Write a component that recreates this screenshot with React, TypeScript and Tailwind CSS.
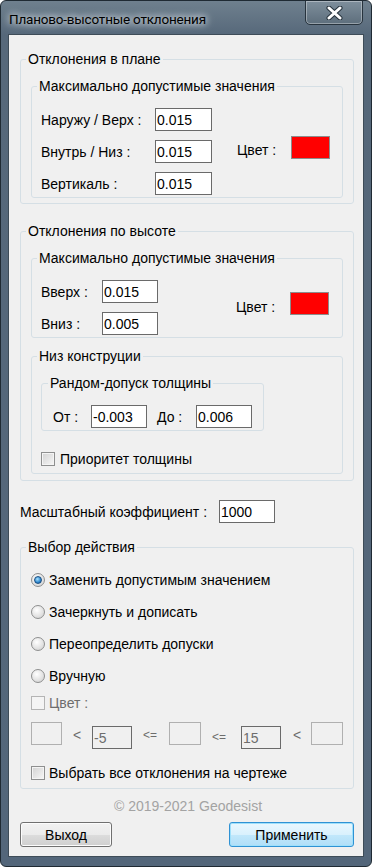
import React from 'react';

const inputCls =
  'h-[23px] bg-white border border-[#6a6a6a] flex items-center pl-[1px] leading-[16px] text-black';

function TextBox({ value, w }: { value: string; w: string }) {
  return <div className={`${inputCls} ${w}`}>{value}</div>;
}

function Swatch({ mt }: { mt: string }) {
  return <div className={`w-[39px] h-[23px] bg-[#ff0000] border border-[#8c8c8c] ${mt}`} />;
}

function CheckBox({ disabled }: { disabled?: boolean }) {
  return (
    <div
      className={
        disabled
          ? 'w-[14px] h-[14px] border border-[#b4b4b4] bg-[#f4f4f4]'
          : 'w-[14px] h-[14px] border border-[#8e8f8f] bg-[linear-gradient(135deg,#d2d2d2,#f7f7f7)] shadow-[inset_0_0_0_1px_#f4f4f4]'
      }
    />
  );
}

function Radio({ checked }: { checked?: boolean }) {
  return (
    <div className="w-[14px] h-[14px] rounded-full border border-[#8e8f8f] bg-[radial-gradient(circle_at_40%_35%,#ffffff,#dcdcdc_70%,#c4c4c4)] flex items-center justify-center">
      {checked && (
        <div className="w-[8px] h-[8px] rounded-full border border-[#1b4f82] bg-[radial-gradient(circle_at_40%_35%,#a8e2ff,#2e88cf_60%,#174d86)]" />
      )}
    </div>
  );
}

const groupCls = 'border border-[#d5dfe5] rounded-[3px]';

function App() {
  return (
    <div className="w-[372px] h-[867px] overflow-hidden rounded-[6px] border border-[#1f2a33] bg-[linear-gradient(180deg,#6f808e_0px,#56687a_34px,#53667a_100%)] font-['Liberation_Sans',Arial,sans-serif] text-[14px] text-black">
      {/* title bar */}
      <div className="h-[33px] flex items-start justify-between pl-[8px] pr-[8px]">
        <span className="mt-[8px] text-[13.5px] tracking-[-0.2px] leading-[20px] font-['Roboto',sans-serif] text-black [text-shadow:0_0_6px_#e8eef2,0_0_10px_#e8eef2]">
          Планово-высотные отклонения
        </span>
        <div className="w-[58px] h-[25px] mt-[-1px] rounded-b-[5px] border border-[#27333d] bg-[linear-gradient(180deg,#7f8f9c,#5d6e7c)] shadow-[inset_0_0_0_1px_rgba(255,255,255,0.35)] flex items-center justify-center">
          <svg width="17" height="14" viewBox="0 0 17 14">
            <path d="M3 2 L14 12 M14 2 L3 12" stroke="#26323c" strokeWidth="5" strokeLinecap="round" />
            <path d="M3 2 L14 12 M14 2 L3 12" stroke="#ffffff" strokeWidth="3" strokeLinecap="round" />
          </svg>
        </div>
      </div>

      {/* client area */}
      <div className="mx-[7px] h-[823px] border border-[#3e4c58] bg-[#f0f0f0] flex flex-col">
        {/* Отклонения в плане */}
        <fieldset className={`${groupCls} ml-[11px] mt-[17px] w-[334px] pb-[5px]`}>
          <legend className="ml-[5px] px-[2px] leading-[15px]">Отклонения в плане</legend>
          <fieldset className={`${groupCls} ml-[10px] mt-[12px] w-[312px] pt-[14px] pl-[9px] pb-[2px]`}>
            <legend className="ml-[-4px] px-[2px] leading-[15px]">Максимально допустимые значения</legend>
            <div className="flex items-start">
              <div className="flex flex-col gap-[9px]">
                {['Наружу / Верх :', 'Внутрь / Низ :', 'Вертикаль :'].map((l) => (
                  <div key={l} className="flex items-center">
                    <span className="w-[114px] pt-[2px]">{l}</span>
                    <TextBox value="0.015" w="w-[57px]" />
                  </div>
                ))}
              </div>
              <span className="ml-[25px] w-[54px] mt-[34px] leading-[16px]">Цвет :</span>
              <Swatch mt="mt-[28px]" />
            </div>
          </fieldset>
        </fieldset>

        {/* Отклонения по высоте */}
        <fieldset className={`${groupCls} ml-[11px] mt-[20px] w-[334px] pb-[6px]`}>
          <legend className="ml-[5px] px-[2px] leading-[15px]">Отклонения по высоте</legend>
          <fieldset className={`${groupCls} ml-[10px] mt-[12px] w-[312px] pt-[14px] pl-[9px] pb-[2px]`}>
            <legend className="ml-[-4px] px-[2px] leading-[15px]">Максимально допустимые значения</legend>
            <div className="flex items-start">
              <div className="flex flex-col gap-[9px]">
                {[
                  ['Вверх :', '0.015'],
                  ['Вниз :', '0.005'],
                ].map(([l, v]) => (
                  <div key={l} className="flex items-center">
                    <span className="w-[61px] pt-[2px]">{l}</span>
                    <TextBox value={v} w="w-[56px]" />
                  </div>
                ))}
              </div>
              <span className="ml-[78px] w-[54px] mt-[19px] leading-[16px]">Цвет :</span>
              <Swatch mt="mt-[12px]" />
            </div>
          </fieldset>

          <fieldset className={`${groupCls} ml-[10px] mt-[11px] w-[312px] pb-[6px]`}>
            <legend className="ml-[5px] px-[2px] leading-[15px]">Низ конструции</legend>
            <fieldset className={`${groupCls} ml-[9px] mt-[12px] w-[223px] pt-[14px] pl-[11px] pb-[2px]`}>
              <legend className="ml-[-5px] px-[2px] leading-[15px]">Рандом-допуск толщины</legend>
              <div className="flex items-center">
                <span className="w-[38px] pt-[2px]">От :</span>
                <TextBox value="-0.003" w="w-[56px]" />
                <span className="ml-[10px] w-[39px] pt-[2px]">До :</span>
                <TextBox value="0.006" w="w-[56px]" />
              </div>
            </fieldset>
            <div className="mt-[20px] ml-[9px] h-[16px] flex items-center gap-[5px]">
              <CheckBox />
              <span className="leading-[16px]">Приоритет толщины</span>
            </div>
          </fieldset>
        </fieldset>

        {/* Масштабный коэффициент */}
        <div className="mt-[19px] ml-[11px] flex items-center">
          <span className="w-[199px] pt-[2px]">Масштабный коэффициент :</span>
          <TextBox value="1000" w="w-[56px]" />
        </div>

        {/* Выбор действия */}
        <fieldset className={`${groupCls} ml-[11px] mt-[17px] w-[334px] pt-[17px] pl-[10px] pb-[7px]`}>
          <legend className="ml-[-5px] px-[2px] leading-[15px]">Выбор действия</legend>
          <div className="flex flex-col gap-[16px]">
            {[
              'Заменить допустимым значением',
              'Зачеркнуть и дописать',
              'Переопределить допуски',
              'Вручную',
            ].map((l, i) => (
              <div key={l} className="h-[16px] flex items-center gap-[4px]">
                <Radio checked={i === 0} />
                <span className="leading-[16px]">{l}</span>
              </div>
            ))}
          </div>
          <div className="mt-[11px] h-[16px] flex items-center gap-[4px]">
            <CheckBox disabled />
            <span className="leading-[16px] text-[#6d6d6d]">Цвет :</span>
          </div>
          <div className="mt-[11px] h-[27px] flex items-start text-[#6d6d6d]">
            <div className="w-[31px] h-[23px] border border-[#b0b0b0]" />
            <span className="w-[30px] pl-[11px] mt-[5px] leading-[16px]">&lt;</span>
            <div className="w-[40px] h-[23px] mt-[4px] border border-[#6a6a6a] flex items-center pl-[1px] leading-[16px]">-5</div>
            <span className="w-[37px] pl-[11px] mt-[5px] leading-[16px] text-[12px]">&lt;=</span>
            <div className="w-[32px] h-[23px] border border-[#b0b0b0]" />
            <span className="w-[40px] pl-[11px] mt-[7px] leading-[16px] text-[12px]">&lt;=</span>
            <div className="w-[40px] h-[23px] mt-[4px] border border-[#6a6a6a] flex items-center pl-[1px] leading-[16px]">15</div>
            <span className="w-[30px] pl-[12px] mt-[5px] leading-[16px]">&lt;</span>
            <div className="w-[32px] h-[23px] border border-[#b0b0b0]" />
          </div>
          <div className="mt-[16px] h-[16px] flex items-center gap-[4px]">
            <CheckBox />
            <span className="leading-[16px]">Выбрать все отклонения на чертеже</span>
          </div>
        </fieldset>

        <div className="mt-[9px] h-[16px] leading-[16px] text-center text-[#a3a3a3] pl-[4px]">© 2019-2021 Geodesist</div>

        {/* buttons */}
        <div className="mt-[8px] ml-[11px] w-[334px] flex justify-between">
          <button className="w-[92px] h-[25px] rounded-[3px] border border-[#707070] bg-[linear-gradient(180deg,#f2f2f2_0%,#ebebeb_50%,#dddddd_50%,#cfcfcf_100%)] shadow-[inset_0_0_0_1px_#fcfcfc] leading-[16px] text-black">
            Выход
          </button>
          <button className="w-[125px] h-[25px] rounded-[3px] border border-[#2f92d4] bg-[linear-gradient(180deg,#eaf7fe_0%,#d9f1fd_50%,#c2e8fb_50%,#b0def8_100%)] shadow-[inset_0_0_0_1px_#9fe0fb] leading-[16px] text-black">
            Применить
          </button>
        </div>
      </div>
    </div>
  );
}

export default App;
